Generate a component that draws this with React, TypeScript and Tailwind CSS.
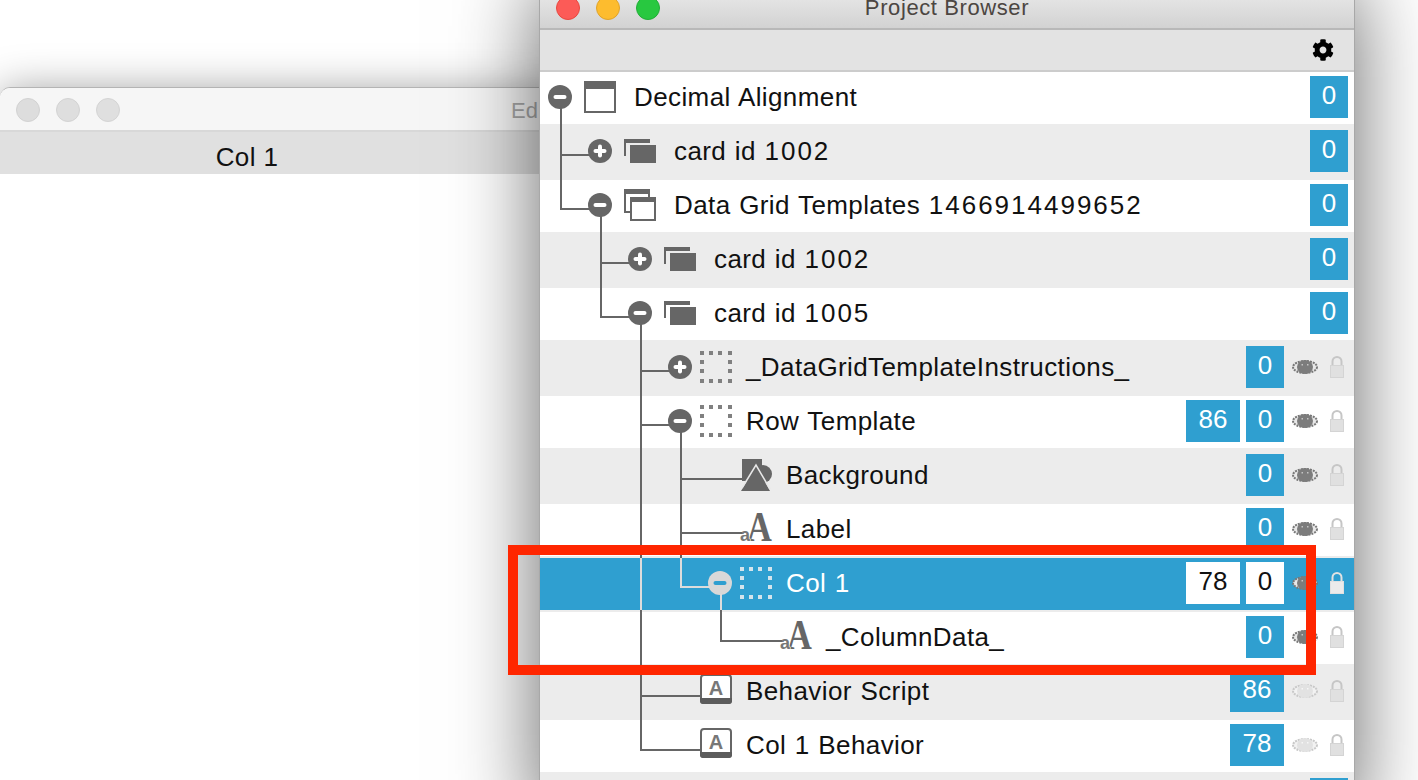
import { FaCog } from 'react-icons/fa';

const BLUE = '#2f9fd0';
const LINE = '#666666';
const LINE_LIGHT = '#dcdcdc';

type IconName = 'window' | 'stackFilled' | 'stackOutline' | 'group' | 'image' | 'field' | 'script';

interface RowData {
  label: string;
  indent: string;
  toggle?: 'plus' | 'minus';
  icon?: IconName;
  badges: string[];
  eye?: 'dark' | 'light';
  selected?: boolean;
  nested?: boolean;
}

const rows: RowData[] = [
  { label: 'Decimal Alignment', indent: 'pl-[8px]', toggle: 'minus', icon: 'window', badges: ['0'] },
  { label: 'card id 1002', indent: 'pl-[48px]', toggle: 'plus', icon: 'stackFilled', badges: ['0'] },
  { label: 'Data Grid Templates 1466914499652', indent: 'pl-[48px]', toggle: 'minus', icon: 'stackOutline', badges: ['0'] },
  { label: 'card id 1002', indent: 'pl-[88px]', toggle: 'plus', icon: 'stackFilled', badges: ['0'] },
  { label: 'card id 1005', indent: 'pl-[88px]', toggle: 'minus', icon: 'stackFilled', badges: ['0'] },
  { label: '_DataGridTemplateInstructions_', indent: 'pl-[128px]', toggle: 'plus', icon: 'group', badges: ['0'], eye: 'dark', nested: true },
  { label: 'Row Template', indent: 'pl-[128px]', toggle: 'minus', icon: 'group', badges: ['86', '0'], eye: 'dark', nested: true },
  { label: 'Background', indent: 'pl-[200px]', icon: 'image', badges: ['0'], eye: 'dark', nested: true },
  { label: 'Label', indent: 'pl-[200px]', icon: 'field', badges: ['0'], eye: 'dark', nested: true },
  { label: 'Col 1', indent: 'pl-[168px]', toggle: 'minus', icon: 'group', badges: ['78', '0'], eye: 'dark', selected: true, nested: true },
  { label: '_ColumnData_', indent: 'pl-[240px]', icon: 'field', badges: ['0'], eye: 'dark', nested: true },
  { label: 'Behavior Script', indent: 'pl-[160px]', icon: 'script', badges: ['86'], eye: 'light', nested: true },
  { label: 'Col 1 Behavior', indent: 'pl-[160px]', icon: 'script', badges: ['78'], eye: 'light', nested: true },
  { label: '', indent: 'pl-[8px]', badges: ['0'] },
];

function Toggle({ kind, selected }: { kind: 'plus' | 'minus'; selected?: boolean }) {
  const bar = selected ? BLUE : '#ffffff';
  return (
    <svg width="24" height="24" viewBox="0 0 24 24" className="shrink-0">
      <circle cx="12" cy="12" r="12" fill={selected ? '#d8d8d8' : '#666666'} />
      <rect x="5.5" y="10" width="13" height="4" rx="2" fill={bar} />
      {kind === 'plus' && <rect x="10" y="5.5" width="4" height="13" rx="2" fill={bar} />}
    </svg>
  );
}

function WindowIcon() {
  return (
    <svg width="32" height="32" viewBox="0 0 32 32">
      <rect x="1" y="1" width="30" height="30" fill="#fff" stroke="#666" strokeWidth="2" />
      <rect x="0" y="0" width="32" height="8" fill="#666" />
    </svg>
  );
}

function StackFilledIcon() {
  return (
    <svg width="32" height="24" viewBox="0 0 32 24">
      <path d="M1 17V1h24" fill="none" stroke="#666" strokeWidth="2" />
      <rect x="0" y="0" width="26" height="4" fill="#666" />
      <rect x="6" y="6" width="26" height="18" fill="#666" />
    </svg>
  );
}

function StackOutlineIcon() {
  return (
    <svg width="32" height="32" viewBox="0 0 32 32">
      <rect x="1" y="1" width="24" height="22" fill="#fff" stroke="#666" strokeWidth="2" />
      <rect x="0" y="0" width="26" height="5" fill="#666" />
      <rect x="7" y="9" width="24" height="22" fill="#fff" stroke="#666" strokeWidth="2" />
      <rect x="6" y="8" width="26" height="5" fill="#666" />
    </svg>
  );
}

function GroupIcon({ selected }: { selected?: boolean }) {
  const pos = [0, 9, 18, 28];
  const fill = selected ? '#d4e4ec' : '#808080';
  return (
    <svg width="32" height="32" viewBox="0 0 32 32">
      {pos.map((p) => (
        <g key={p} fill={fill}>
          <rect x={p} y="0" width="4" height="4" />
          <rect x={p} y="28" width="4" height="4" />
          <rect x="0" y={p} width="4" height="4" />
          <rect x="28" y={p} width="4" height="4" />
        </g>
      ))}
    </svg>
  );
}

function ImageIcon() {
  return (
    <svg width="32" height="32" viewBox="0 0 32 32">
      <rect x="2" y="0" width="20" height="22" fill="#666" />
      <ellipse cx="23" cy="15" rx="9" ry="9" fill="#666" />
      <path d="M1 32 16 7l14 25Z" fill="#666" />
      <path d="M2 29 16 6l14 24" fill="none" stroke="#e8e8e8" strokeWidth="1.5" />
    </svg>
  );
}

function FieldIcon() {
  return (
    <svg width="32" height="32" viewBox="0 0 32 32" className="overflow-visible">
      <text
        x="0"
        y="28"
        transform="translate(19.5 0) scale(0.8 1)"
        textAnchor="middle"
        fontFamily="'Liberation Serif', serif"
        fontWeight="700"
        fontSize="43"
        fill="#666"
      >
        A
      </text>
      <text
        x="5"
        y="28"
        textAnchor="middle"
        fontFamily="'Liberation Sans', sans-serif"
        fontWeight="700"
        fontSize="18"
        fill="#777"
        stroke="#fff"
        strokeWidth="1"
        paintOrder="stroke"
      >
        a
      </text>
    </svg>
  );
}

function ScriptIcon() {
  return (
    <svg width="32" height="30" viewBox="0 0 32 30">
      <rect x="1" y="1" width="30" height="28" rx="3" fill="#fff" stroke="#666" strokeWidth="2" />
      <path d="M0 24h32v3a3 3 0 0 1-3 3H3a3 3 0 0 1-3-3Z" fill="#5c5c5c" />
      <text x="16" y="21" textAnchor="middle" fontFamily="'Liberation Sans', sans-serif" fontWeight="700" fontSize="20" fill="#777">
        A
      </text>
    </svg>
  );
}

function EyeIcon({ tone }: { tone: 'dark' | 'light' }) {
  const dark = tone === 'dark';
  return (
    <svg width="26" height="14" viewBox="0 0 26 14" className="shrink-0">
      <ellipse cx="13" cy="7" rx="12" ry="6" fill={dark ? '#e8e8e8' : '#f2f2f2'} stroke={dark ? '#777' : '#c8c8c8'} strokeWidth="2" strokeDasharray="2 1" />
      <ellipse cx="13" cy="7" rx="8" ry="7" fill={dark ? '#7c7c7c' : '#e2e2e2'} />
      <rect x="9.5" y="4" width="1.5" height="1.5" fill={dark ? '#c4c4c4' : '#f6f6f6'} />
      <rect x="15" y="4" width="1.5" height="1.5" fill={dark ? '#c4c4c4' : '#f6f6f6'} />
    </svg>
  );
}

function LockIcon({ selected }: { selected?: boolean }) {
  return (
    <svg width="14" height="22" viewBox="0 0 14 22" className="shrink-0">
      <path d="M2.5 11V5.5a4.5 4.5 0 0 1 9 0V11" fill={selected ? BLUE : 'none'} stroke={selected ? '#e2e2e2' : '#c6c6c6'} strokeWidth="2" />
      <rect x="0.5" y="9.5" width="13" height="12" fill={selected ? '#ebebeb' : '#e0e0e0'} stroke={selected ? '#e0e0e0' : '#d4d4d4'} />
    </svg>
  );
}

function RowIcon({ name, selected }: { name: IconName; selected?: boolean }) {
  if (name === 'window') return <WindowIcon />;
  if (name === 'stackFilled') return <StackFilledIcon />;
  if (name === 'stackOutline') return <StackOutlineIcon />;
  if (name === 'group') return <GroupIcon selected={selected} />;
  if (name === 'image') return <ImageIcon />;
  if (name === 'field') return <FieldIcon />;
  return <ScriptIcon />;
}

// long ids run a little wider than the rest of the label
function Label({ text }: { text: string }) {
  const parts = text.split(/(\d{2,})/);
  return (
    <>
      {parts.map((part, i) =>
        i % 2 === 1 ? (
          <span key={i} className="tracking-[2px]">
            {part}
          </span>
        ) : (
          part
        ),
      )}
    </>
  );
}

function TreeRow({ row, index }: { row: RowData; index: number }) {
  let background = index % 2 === 0 ? 'bg-white shadow-[inset_0_2px_0_#ececec]' : 'bg-[#ececec]';
  if (index === 0) background = 'bg-white shadow-[inset_0_2px_0_#cccccc]';
  if (row.selected) background = 'bg-[#2f9fd0] shadow-[inset_0_2px_0_#ececec]';

  return (
    <div className={`flex h-[54px] items-center ${row.eye ? 'pr-[10px]' : 'pr-[6px]'} ${row.indent} ${background}`}>
      {row.toggle && <Toggle kind={row.toggle} selected={row.selected} />}
      {row.icon && (
        <div
          className={`flex w-[32px] shrink-0 justify-center ${row.icon === 'script' ? 'mb-[4px]' : ''} ${
            row.toggle ? (row.nested ? 'ml-[8px]' : 'ml-[12px]') : ''
          }`}
        >
          <RowIcon name={row.icon} selected={row.selected} />
        </div>
      )}
      <span
        className={`${row.nested ? 'ml-[14px]' : 'ml-[18px]'} whitespace-nowrap tracking-[0.4px] [word-spacing:1px] ${
          row.selected ? 'text-white' : 'text-[#111]'
        }`}
      >
        <Label text={row.label} />
      </span>
      <div className="ml-auto flex items-center gap-[6px]">
        {row.badges.map((badge, i) => (
          <div
            key={i}
            className={`flex h-[42px] items-center justify-center pb-[4px] ${badge.length > 1 ? 'w-[54px]' : 'w-[38px]'} ${
              row.selected ? 'bg-white text-[#111]' : 'bg-[#2f9fd0] text-white'
            }`}
          >
            {badge}
          </div>
        ))}
      </div>
      {row.eye && (
        <>
          <div className="ml-[8px]">
            <EyeIcon tone={row.eye} />
          </div>
          <div className="ml-[12px]">
            <LockIcon selected={row.selected} />
          </div>
        </>
      )}
    </div>
  );
}

// connector lines, in page coordinates
function TreeLines() {
  return (
    <svg
      width="814"
      height="710"
      viewBox="540 70 814 710"
      className="pointer-events-none absolute left-0 top-0"
      fill="none"
      stroke={LINE}
      strokeWidth="2"
    >
      <path d="M561 108V209H590M561 155H590" />
      <path d="M601 216V317H630M601 263H630" />
      <path d="M641 324V558M641 610V750H702M641 371H670M641 425H670M641 696H702" />
      <path d="M681 432V558M681 479H742M681 533H742" />
      <path d="M721 610V641H782" />
      <g stroke={LINE_LIGHT}>
        <path d="M641 558V610" />
        <path d="M681 558V587H710" />
        <path d="M721 594V610" />
      </g>
    </svg>
  );
}

function Lights({ colors }: { colors: string[] }) {
  return (
    <div className="flex gap-[16px]">
      {colors.map((c) => (
        <div key={c} className={`h-[24px] w-[24px] rounded-full border ${c}`} />
      ))}
    </div>
  );
}

export default function App() {
  return (
    <div className="relative h-[780px] w-[1418px] overflow-hidden bg-white font-['Liberation_Sans',sans-serif] text-[26px] leading-none">
      {/* back window */}
      <div className="absolute left-0 top-[87px] h-[720px] w-[560px] rounded-tl-[10px] border-t border-[#b4b4b4] bg-white shadow-[0_4px_44px_rgba(0,0,0,0.4)]">
        <div className="flex h-[44px] items-center rounded-tl-[10px] border-b-2 border-[#d8d8d8] bg-[#f6f6f6] pl-[16px] pr-[22px] pt-[2px]">
          <Lights
            colors={[
              'border-[#d2d2d2] bg-[#dddddd]',
              'border-[#d3d3d3] bg-[#dedede]',
              'border-[#d4d4d4] bg-[#dfdfdf]',
            ]}
          />
          <span className="ml-auto mt-[2px] text-[22px] text-[#a8a8a8]">Ed</span>
        </div>
        <div className="h-[42px] bg-[#e0e0e0]">
          <div className="flex h-full w-[494px] items-center justify-center pt-[8px] tracking-[0.4px] text-[#111]">Col 1</div>
        </div>
      </div>

      {/* project browser window */}
      <div className="absolute left-[539px] top-[-14px] h-[840px] w-[816px] border-x border-[#a8a8a8] bg-white shadow-[0_0_80px_rgba(0,0,0,0.6)]">
        <div className="relative flex h-[44px] items-center border-b-2 border-[#b8b8b8] bg-gradient-to-b from-[#ececec] to-[#d2d2d2] pl-[16px] pt-[2px]">
          <Lights
            colors={[
              'border-[#e8483f] bg-[#fc5b57]',
              'border-[#e0a32a] bg-[#fdbc2e]',
              'border-[#22ad37] bg-[#28c840]',
            ]}
          />
          <span className="absolute inset-x-0 top-[11px] text-center text-[22px] tracking-[0.6px] text-[#4c4642]">Project Browser</span>
        </div>
        <div className="flex h-[40px] items-center justify-end bg-[#e3e3e3] pr-[20px]">
          <FaCog className="h-[22px] w-[22px] text-black" />
        </div>
        <div className="relative">
          {rows.map((row, index) => (
            <TreeRow key={index} row={row} index={index} />
          ))}
          <TreeLines />
        </div>
      </div>

      {/* annotation */}
      <div className="pointer-events-none absolute left-[508px] top-[545px] h-[130px] w-[808px] border-[10px] border-[#ff2600]" />
    </div>
  );
}
